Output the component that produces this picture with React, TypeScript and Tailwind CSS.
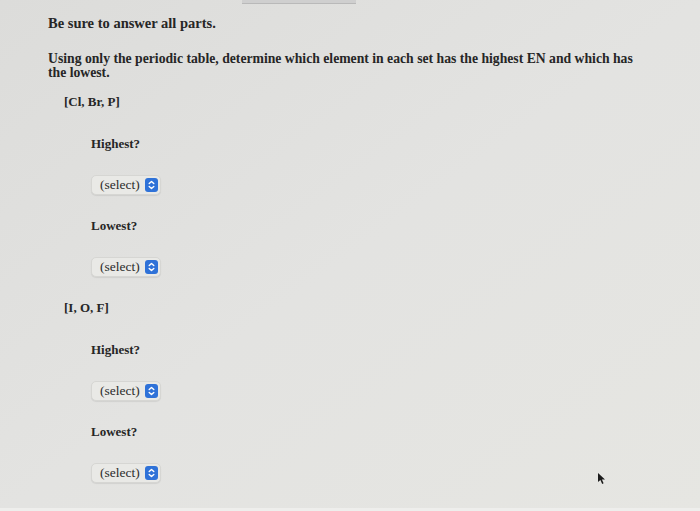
import React from "react";

function SelectBox() {
  return (
    <div className="flex h-[20px] w-[70px] items-center justify-between rounded-[5px] border border-[#d6d6d3] bg-[#e9e9e6] pl-[8px] pr-[2px] shadow-[0_1px_1px_rgba(0,0,0,0.08)]">
      <span className="text-[13.5px] font-normal leading-none text-[#2c2c2c]">(select)</span>
      <span className="flex h-[14px] w-[13px] items-center justify-center rounded-[3px] bg-[#2f72d8]">
        <svg width="7" height="10" viewBox="0 0 7 10" fill="none" stroke="white" strokeWidth="1.4" strokeLinecap="round" strokeLinejoin="round">
          <path d="M1.2 3.6 L3.5 1.4 L5.8 3.6" />
          <path d="M1.2 6.4 L3.5 8.6 L5.8 6.4" />
        </svg>
      </span>
    </div>
  );
}

function Question({ label }: { label: string }) {
  return (
    <div className="flex flex-col">
      <div className="font-bold">{label}</div>
      <div className="mt-[24px]">
        <SelectBox />
      </div>
    </div>
  );
}

function ElementSet({ title }: { title: string }) {
  return (
    <div className="flex flex-col">
      <div className="font-bold">{title}</div>
      <div className="mt-[28px] flex flex-col gap-[24px] pl-[27px]">
        <Question label="Highest?" />
        <Question label="Lowest?" />
      </div>
    </div>
  );
}

export default function App() {
  return (
    <div
      className="relative h-[511px] w-[700px] overflow-hidden bg-gradient-to-br from-[#dcdcda] via-[#e3e3e1] to-[#e6e6e2] text-[13px] leading-[14px] text-[#262626]"
      style={{ fontFamily: '"Liberation Serif", "Times New Roman", serif' }}
    >
      {/* top tab bar */}
      <div className="absolute left-[242px] top-0 h-[4px] w-[114px] border-b border-[#b9b9b9] bg-[#cfcfcf]" />
      <div className="absolute bottom-0 left-0 h-[3px] w-full bg-[#eeeeec]" />

      <div className="flex flex-col pl-[48px] pt-[16px]">
        <div className="text-[14.5px] font-bold">Be sure to answer all parts.</div>
        <div className="mt-[22px] w-[600px] text-[13.7px] font-bold leading-[14px]">
          Using only the periodic table, determine which element in each set has the highest EN and which has the lowest.
        </div>

        <div className="mt-[15px] flex flex-col gap-[24px] pl-[16px]">
          <ElementSet title="[Cl, Br, P]" />
          <ElementSet title="[I, O, F]" />
        </div>
      </div>

      {/* mouse pointer */}
      <svg className="absolute left-[597px] top-[472px]" width="10" height="13" viewBox="0 0 10 13">
        <path d="M1 1 L1 10 L3.4 8 L5.2 12 L6.6 11.3 L4.9 7.5 L8 7.5 Z" fill="#1c1c1c" />
      </svg>
    </div>
  );
}
